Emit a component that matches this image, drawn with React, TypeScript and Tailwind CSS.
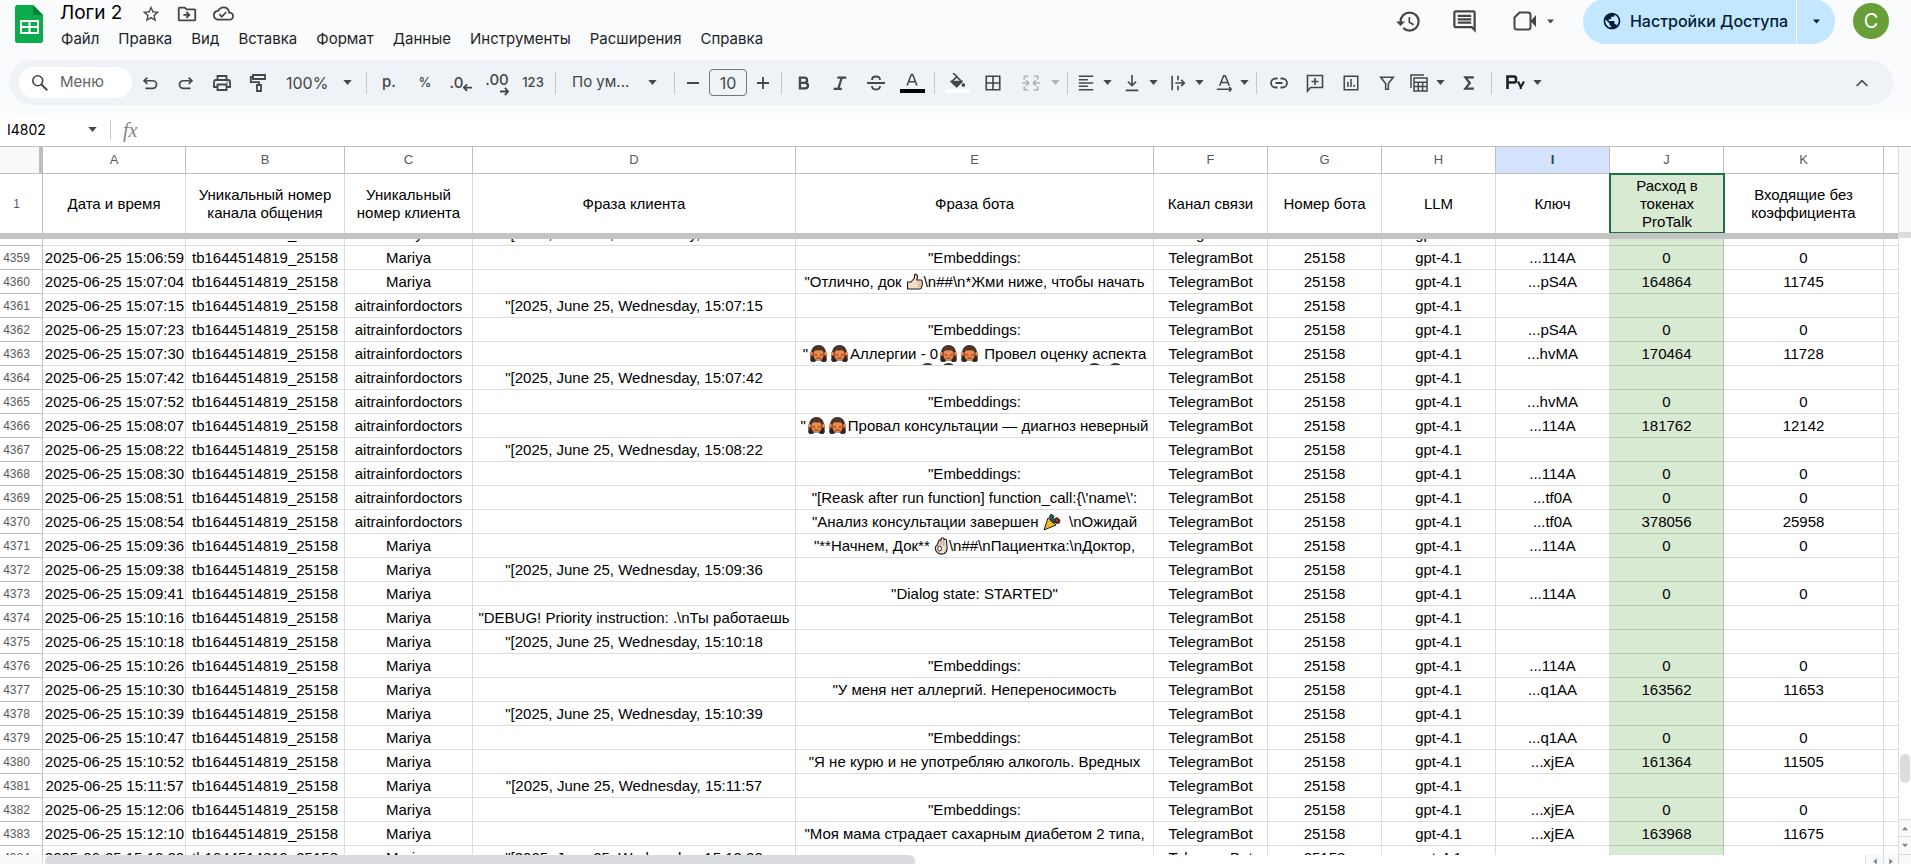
import React, { useState } from 'react';
import {
  MdOutlineDriveFileMove,
  MdOutlineCloudDone,
  MdHistory,
  MdOutlineComment,
  MdPublic,
  MdStarBorder,
} from 'react-icons/md';

interface LogRow {
  n: number;
  time: string;
  client: string;
  phrase?: string;
  bot?: React.ReactNode;
  key?: string;
  spent?: string;
  incoming?: string;
}

const M = 'Mariya';
const A = 'aitrainfordoctors';
const EMB = '"Embeddings:';

const Monkey = () => (
  <svg viewBox="0 0 21 17" className="inline-block w-[21px] h-[17px] align-[-3px]" aria-hidden="true">
    <path d="M4 16.500Q2 16.500 3 12 1.500 9 3.500 7 4.500.500 10.500.500T17.500 7Q19.500 9 18 12 19 16.500 17 16.500H14L13 15H8L7 16.500Z" fill="#4e3529" stroke="#1d1512" strokeWidth="0.8" />
    <ellipse cx="3.300" cy="8.800" rx="1.500" ry="2" fill="#f08c4e" />
    <ellipse cx="17.700" cy="8.800" rx="1.500" ry="2" fill="#f08c4e" />
    <path d="M5.500 8.500Q6 4.500 10.500 5.500 15 4.500 15.500 8.500 16 15.300 10.500 15.300T5.500 8.500Z" fill="#f08c4e" />
    <path d="M6 8.500 9.500 9v2.500L6.500 11zM15 8.500 11.500 9v2.500l3-.500z" fill="#c96032" />
    <path d="M8.500 13.200h4" stroke="#4e2a1c" strokeWidth="0.9" />
    <path d="M3.200 11.500 6 12.500 7 16H4Q2.500 15.500 3.200 11.500ZM17.800 11.500 15 12.500 14 16h3Q18.500 15.500 17.800 11.500Z" fill="#33241f" />
  </svg>
);

const ThumbUp = () => (
  <svg viewBox="0 0 18 18" className="inline-block w-[18px] h-[18px] align-[-4px]" aria-hidden="true">
    <path d="M1.500 9H5l3.500-4V2.500Q8.500 1 10 1.300 12 2 11.300 5L10.800 7H15q1.600.300 1 2 1 1 .200 2.300.500 1.300-.600 2.300.200 2-1.600 2.400H1.500Z" fill="#f6dcc8" stroke="#1f1a17" strokeWidth="1.100" strokeLinejoin="round" />
    <path d="M11.500 9.200h4M11.500 11.400h4M11.500 13.600H15" stroke="#c79f85" strokeWidth="0.8" />
  </svg>
);

const Popper = () => (
  <svg viewBox="0 0 18 18" className="inline-block w-[18px] h-[18px] align-[-4px]" aria-hidden="true">
    <path d="M5 5l8 7L1 17Z" fill="#f5b928" stroke="#1f1a17" strokeWidth="1" strokeLinejoin="round" />
    <path d="M6 4 8 1l3 2-1 3 3 3-3 1Z" fill="#12636b" stroke="#1f1a17" strokeWidth="0.8" />
    <path d="M11 6l3-1.500L17 7l-.500 3-3.500.500Z" fill="#6e2a22" stroke="#1f1a17" strokeWidth="0.8" />
    <circle cx="14" cy="7.500" r="1" fill="#a8402b" />
  </svg>
);

const OkHand = () => (
  <svg viewBox="0 0 15 18" className="inline-block w-[15px] h-[18px] align-[-4px]" aria-hidden="true">
    <path d="M3.200 8 5 3.500Q6 2 7 3.500L7.300 1.500Q8.500 0 9.800 1.500L10.300 2.500Q12 1.500 12.500 3.500L13 10q.500 4.500-2.500 6.500-3.500 1.500-7-.800Q.500 13 1.500 10 2 8.500 3.200 8Z" fill="#efdccf" stroke="#1f1a17" strokeWidth="1.100" strokeLinejoin="round" />
    <path d="M7 3.500V8M9.800 2.500V9" stroke="#8a7264" strokeWidth="0.7" />
    <ellipse cx="5.600" cy="11.500" rx="1.900" ry="2.500" fill="#fff" stroke="#1f1a17" strokeWidth="0.9" />
  </svg>
);

const rows: LogRow[] = [
  { n: 4358, time: '15:06:50', client: M, phrase: '15:06:50' },
  { n: 4359, time: '15:06:59', client: M, bot: EMB, key: '114A', spent: '0', incoming: '0' },
  { n: 4360, time: '15:07:04', client: M, bot: <>"Отлично, док <ThumbUp />\n##\n*Жми ниже, чтобы начать</>, key: 'pS4A', spent: '164864', incoming: '11745' },
  { n: 4361, time: '15:07:15', client: A, phrase: '15:07:15' },
  { n: 4362, time: '15:07:23', client: A, bot: EMB, key: 'pS4A', spent: '0', incoming: '0' },
  {
    n: 4363,
    time: '15:07:30',
    client: A,
    bot: (
      <>
        "<Monkey /><Monkey />Аллергии - 0<Monkey /><Monkey /> Провел оценку аспекта
        <span className="flex justify-between pl-[121px] pr-[27px]">
          <span><Monkey /><Monkey /></span>
          <span><Monkey /><Monkey /></span>
        </span>
      </>
    ),
    key: 'hvMA',
    spent: '170464',
    incoming: '11728',
  },
  { n: 4364, time: '15:07:42', client: A, phrase: '15:07:42' },
  { n: 4365, time: '15:07:52', client: A, bot: EMB, key: 'hvMA', spent: '0', incoming: '0' },
  { n: 4366, time: '15:08:07', client: A, bot: <>"<Monkey /><Monkey />Провал консультации — диагноз неверный</>, key: '114A', spent: '181762', incoming: '12142' },
  { n: 4367, time: '15:08:22', client: A, phrase: '15:08:22' },
  { n: 4368, time: '15:08:30', client: A, bot: EMB, key: '114A', spent: '0', incoming: '0' },
  { n: 4369, time: '15:08:51', client: A, bot: `"[Reask after run function] function_call:{\\'name\\':`, key: 'tf0A', spent: '0', incoming: '0' },
  { n: 4370, time: '15:08:54', client: A, bot: <>"Анализ консультации завершен <Popper />&nbsp; \nОжидай</>, key: 'tf0A', spent: '378056', incoming: '25958' },
  { n: 4371, time: '15:09:36', client: M, bot: <>"**Начнем, Док** <OkHand />\n##\nПациентка:\nДоктор,</>, key: '114A', spent: '0', incoming: '0' },
  { n: 4372, time: '15:09:38', client: M, phrase: '15:09:36' },
  { n: 4373, time: '15:09:41', client: M, bot: '"Dialog state: STARTED"', key: '114A', spent: '0', incoming: '0' },
  { n: 4374, time: '15:10:16', client: M, phrase: 'debug' },
  { n: 4375, time: '15:10:18', client: M, phrase: '15:10:18' },
  { n: 4376, time: '15:10:26', client: M, bot: EMB, key: '114A', spent: '0', incoming: '0' },
  { n: 4377, time: '15:10:30', client: M, bot: '"У меня нет аллергий. Непереносимость', key: 'q1AA', spent: '163562', incoming: '11653' },
  { n: 4378, time: '15:10:39', client: M, phrase: '15:10:39' },
  { n: 4379, time: '15:10:47', client: M, bot: EMB, key: 'q1AA', spent: '0', incoming: '0' },
  { n: 4380, time: '15:10:52', client: M, bot: '"Я не курю и не употребляю алкоголь. Вредных', key: 'xjEA', spent: '161364', incoming: '11505' },
  { n: 4381, time: '15:11:57', client: M, phrase: '15:11:57' },
  { n: 4382, time: '15:12:06', client: M, bot: EMB, key: 'xjEA', spent: '0', incoming: '0' },
  { n: 4383, time: '15:12:10', client: M, bot: '"Моя мама страдает сахарным диабетом 2 типа,', key: 'xjEA', spent: '163968', incoming: '11675' },
  { n: 4384, time: '15:12:20', client: M, phrase: '15:12:20' },
];

const phraseText = (p?: string) => {
  if (!p) return null;
  if (p === 'debug') return '"DEBUG! Priority instruction: .\\nТы работаешь';
  return `"[2025, June 25, Wednesday, ${p}`;
};

const letters = ['A', 'B', 'C', 'D', 'E', 'F', 'G', 'H', 'I', 'J', 'K'];
const titles = [
  'Дата и время',
  'Уникальный номер канала общения',
  'Уникальный номер клиента',
  'Фраза клиента',
  'Фраза бота',
  'Канал связи',
  'Номер бота',
  'LLM',
  'Ключ',
  'Расход в токенах ProTalk',
  'Входящие без коэффициента',
];
const menu = ['Файл', 'Правка', 'Вид', 'Вставка', 'Формат', 'Данные', 'Инструменты', 'Расширения', 'Справка'];

const Cols = () => (
  <colgroup>
    <col className="w-[43px]" />
    <col className="w-[143px]" />
    <col className="w-[159px]" />
    <col className="w-32" />
    <col className="w-[323px]" />
    <col className="w-[358px]" />
    <col className="w-[114px]" />
    <col className="w-[114px]" />
    <col className="w-[114px]" />
    <col className="w-[114px]" />
    <col className="w-[114px]" />
    <col className="w-40" />
    <col />
  </colgroup>
);

const Caret = ({ className = 'w-[9px]' }: { className?: string }) => (
  <svg viewBox="0 0 10 6" className={`h-[5px] shrink-0 fill-current ${className}`} aria-hidden="true">
    <path d="M0 0h10L5 6z" />
  </svg>
);

const Sep = () => <span className="w-px h-[22px] mx-1 shrink-0 bg-[#c4c7c5]" />;

interface ToolProps {
  label: string;
  children: React.ReactNode;
}

const Tool = ({ label, children }: ToolProps) => (
  <button aria-label={label} title={label} className="w-9 h-8 shrink-0 flex items-center justify-center rounded hover:bg-black/5">
    {children}
  </button>
);

const DropTool = ({ label, children }: ToolProps) => (
  <button aria-label={label} title={label} className="w-[46px] h-8 shrink-0 flex items-center rounded hover:bg-black/5">
    <span className="w-7 flex justify-center">{children}</span>
    <span className="w-3.5 flex justify-center"><Caret /></span>
  </button>
);

const Ico = ({ children, w = 20 }: { children: React.ReactNode; w?: number }) => (
  <svg width={w} height={w} viewBox="0 0 20 20" fill="none" stroke="currentColor" strokeWidth="1.6" className="shrink-0" aria-hidden="true">
    {children}
  </svg>
);

const Toolbar = () => {
  const [size, setSize] = useState('10');

  return (
    <div className="h-[45px] ml-[9px] mr-[18px] mb-2 pl-2.5 pr-[13px] flex items-center rounded-full bg-[#eff3f8] text-[#444746]">
      <label className="w-[113px] h-[31px] shrink-0 pl-3 flex items-center gap-[11px] rounded-full bg-white">
        <Ico w={18}>
          <circle cx="7.5" cy="7.5" r="5.5" strokeWidth="1.8" />
          <path d="M11.6 11.6 18 18" strokeWidth="2.2" />
        </Ico>
        <input aria-label="Меню" placeholder="Меню" className="w-16 text-[15px] outline-none placeholder:text-[#5f6368]" />
      </label>
      <Tool label="Отменить">
        <Ico w={18}><path d="M7 4 3.500 7.500 7 11M3.500 7.500H13a4 4 0 0 1 0 8.500H5" strokeWidth="1.900" /></Ico>
      </Tool>
      <Tool label="Повторить">
        <Ico w={18}><path d="M13 4l3.500 3.500L13 11M16.500 7.500H7a4 4 0 0 0 0 8.500h8" strokeWidth="1.900" /></Ico>
      </Tool>
      <Tool label="Печать">
        <Ico><path d="M5.500 7V3h9v4M5.500 14H2V9q0-2 2-2h12q2 0 2 2v5h-3.500M5.500 11.500h9V17h-9z" strokeWidth="1.800" /><path d="M14.500 9.500h1.200" /></Ico>
      </Tool>
      <Tool label="Копировать форматирование">
        <Ico><path d="M5 2h12v4H5zM5 4H2.800v5.200H11V12M9 12h4v6H9z" strokeWidth="1.800" /></Ico>
      </Tool>
      <label className="w-[86px] h-8 shrink-0 pl-2.5 flex items-center">
        <select aria-label="Масштаб" className="w-[57px] appearance-none bg-transparent text-base outline-none">
          <option>100%</option>
          <option>75%</option>
        </select>
        <Caret />
      </label>
      <Sep />
      <Tool label="Денежный формат"><span className="text-[15px] font-medium">р.</span></Tool>
      <Tool label="Процентный формат"><span className="text-[13px] font-medium">%</span></Tool>
      <Tool label="Уменьшить число знаков после запятой">
        <span className="flex items-end text-[15px] leading-5 font-medium">
          .0
          <Ico w={9}><path d="M9 1 2 8l7 7M2 8h18" strokeWidth="4" /></Ico>
        </span>
      </Tool>
      <Tool label="Увеличить число знаков после запятой">
        <span className="pt-1 flex flex-col items-end text-[15px] leading-[14px] font-medium">
          .00
          <Ico w={9}><path d="M11 2l7 8-7 8M18 10H0" strokeWidth="4" /></Ico>
        </span>
      </Tool>
      <Tool label="Другие форматы"><span className="text-[13px] font-medium">123</span></Tool>
      <Sep />
      <label className="w-[110px] h-8 shrink-0 pl-3 flex items-center">
        <select aria-label="Шрифт" className="w-[76px] appearance-none bg-transparent text-[15px] outline-none">
          <option>По ум...</option>
          <option>Arial</option>
        </select>
        <Caret />
      </label>
      <Sep />
      <button aria-label="Уменьшить размер шрифта" className="w-7 h-8 shrink-0 flex items-center justify-center">
        <span className="w-3 h-0.5 bg-current" />
      </button>
      <input
        aria-label="Размер шрифта"
        value={size}
        onChange={(e) => setSize(e.target.value)}
        className="w-[38px] h-[27px] mx-0.5 shrink-0 text-center text-base border border-[#747775] rounded"
      />
      <button aria-label="Увеличить размер шрифта" className="w-7 h-8 shrink-0 flex items-center justify-center">
        <Ico w={12}><path d="M10 0v20M0 10h20" strokeWidth="3" /></Ico>
      </button>
      <Sep />
      <Tool label="Полужирный">
        <Ico w={18}><path d="M5.500 4h5a2.800 2.800 0 0 1 0 5.800h-5zM5.500 9.800h5.800a3 3 0 0 1 0 6.200H5.500z" strokeWidth="2.600" /></Ico>
      </Tool>
      <Tool label="Курсив">
        <Ico w={18}><path d="M7 4h10M3 16.500h9M12 4 8 16.500" strokeWidth="2.400" /></Ico>
      </Tool>
      <Tool label="Зачеркнутый">
        <Ico><path d="M1 10h18M14 7q0-3.500-4-3.500T6 7M6 13q0 3.500 4 3.500t4-3.500" strokeWidth="1.800" /></Ico>
      </Tool>
      <Tool label="Цвет текста">
        <span className="w-[25px] flex flex-col items-center">
          <Ico w={14}><path d="M3 18 9 2h2l6 16M5.500 12.500h9" strokeWidth="2.200" /></Ico>
          <span className="w-full h-1 mt-0.5 bg-black" />
        </span>
      </Tool>
      <Sep />
      <Tool label="Цвет заливки">
        <span className="w-[25px] flex flex-col items-center">
          <Ico w={16}>
            <path d="M5 0l5 4.500L3 11l6.500 6 6.500-6-6.500-6.500" strokeWidth="2" />
            <path d="M3 10.500h13L9.500 17z" fill="currentColor" />
            <circle cx="18" cy="15" r="1.500" fill="currentColor" />
          </Ico>
          <span className="w-full h-1 bg-white" />
        </span>
      </Tool>
      <Tool label="Границы">
        <Ico w={18}><path d="M2.500 2.500h15v15h-15zM10 2.500v15M2.500 10h15" strokeWidth="1.800" /></Ico>
      </Tool>
      <button aria-label="Объединить ячейки" className="w-[52px] h-8 shrink-0 flex items-center text-[#b0b3b5]">
        <span className="w-10 flex justify-center">
          <Ico w={18}>
            <path d="M7 2.500H2.500V6M13 2.500h4.500V6M7 17.500H2.500V14M13 17.500h4.500V14M0 10h7M4.500 7 7.500 10l-3 3M20 10h-7M15.500 7l-3 3 3 3" strokeWidth="1.800" />
          </Ico>
        </span>
        <Caret />
      </button>
      <Sep />
      <DropTool label="Горизонтальное выравнивание">
        <Ico w={18}><path d="M2 2.500h16M2 6.300h10M2 10h16M2 13.700h10M2 17.500h16" /></Ico>
      </DropTool>
      <DropTool label="Вертикальное выравнивание">
        <Ico w={18}><path d="M10 1v12M5.500 8.500 10 13l4.500-4.500M3 18.200h14" strokeWidth="1.800" /></Ico>
      </DropTool>
      <DropTool label="Перенос текста">
        <Ico w={18}><path d="M3.500 2v16M10 2v5M10 13v5M7 10h10M13.500 6.500 17 10l-3.500 3.500" strokeWidth="1.800" /></Ico>
      </DropTool>
      <button aria-label="Поворот текста" className="w-[42px] h-8 shrink-0 flex items-center">
        <span className="w-[30px] flex justify-center">
          <Ico w={18}><path d="M4 13 8.500 2h1.800l4.500 11M6 9.500h7M1 17h16M14.500 14.500 17 17l-2.500 2.500" strokeWidth="1.700" /></Ico>
        </span>
        <Caret />
      </button>
      <Sep />
      <Tool label="Вставить ссылку">
        <Ico><path d="M8.500 5.500H6.500a4.500 4.500 0 0 0 0 9h2M11.500 5.500h2a4.500 4.500 0 0 1 0 9h-2M6.500 10h7" strokeWidth="1.800" /></Ico>
      </Tool>
      <Tool label="Вставить комментарий">
        <Ico><path d="M2.500 18V2.500h15v12H5.500zM10 5v7M6.500 8.500h7" /></Ico>
      </Tool>
      <Tool label="Вставить диаграмму">
        <Ico w={18}><path d="M2.500 2.500h15v15h-15zM6.500 8.500v6M10 5.500v9M13.500 12v2.500" strokeWidth="1.700" /></Ico>
      </Tool>
      <Tool label="Создать фильтр">
        <Ico w={18}><path d="M3 3.500h14l-5.500 7V17h-3v-6.500z" strokeWidth="1.700" /></Ico>
      </Tool>
      <DropTool label="Фильтры">
        <Ico><path d="M2 15V2h13M5 5h13v13H5zM5 9.300h13M5 13.600h13M9.300 9.300V18M13.600 9.300V18" strokeWidth="1.500" /></Ico>
      </DropTool>
      <Tool label="Функции">
        <Ico w={16}><path d="M16 3H5.500L11 10l-5.500 7H16" strokeWidth="2.800" /></Ico>
      </Tool>
      <Sep />
      <button aria-label="Py" className="h-8 shrink-0 pl-2.5 flex items-center gap-2 text-[#1f1f1f]">
        <svg width="19" height="15" viewBox="0 0 19 15" fill="none" stroke="currentColor" aria-hidden="true">
          <path d="M1.500 14V1.500h6.500q2 0 2 2v2q0 2-2 2H1.500" strokeWidth="2.600" />
          <path d="M12 6.500 14.800 12 18 6.500M14.800 11.500V14" strokeWidth="2.200" />
        </svg>
        <Caret className="w-[9px] text-[#444746]" />
      </button>
      <span className="flex-1" />
      <Tool label="Скрыть меню">
        <Ico w={12}><path d="M1 15l9-9 9 9" strokeWidth="2.800" /></Ico>
      </Tool>
    </div>
  );
};

const Header = () => (
  <header className="h-[60px] pl-[15px] pr-[22px] flex items-start justify-between">
    <div className="flex">
      <svg viewBox="0 0 28 38" className="w-7 h-[38px] mt-[5px] mr-[11px]" aria-hidden="true">
        <path d="M2.500 0H18l10 10v25.500a2.500 2.500 0 0 1-2.500 2.500h-23A2.500 2.500 0 0 1 0 35.500v-33A2.500 2.500 0 0 1 2.500 0z" fill="#0cac4c" />
        <path d="M18 0l10 10H18z" fill="#09803a" />
        <path d="M6 16h17v12H6zM6 22h17M14.500 16v12" fill="none" stroke="#fff" strokeWidth="2" />
      </svg>
      <div>
        <div className="h-[27px] pl-[6px] flex items-center text-[#444746]">
          <h1 className="w-[73px] text-[19px] text-black">Логи 2</h1>
          <button aria-label="Пометить" className="w-9 flex justify-center"><MdStarBorder size={20} /></button>
          <button aria-label="Переместить" className="w-9 flex justify-center"><MdOutlineDriveFileMove size={22} /></button>
          <button aria-label="Статус документа" className="w-9 flex justify-center"><MdOutlineCloudDone size={21} /></button>
        </div>
        <nav className="h-6 pl-[7px] flex items-center gap-[19px] text-[15px] text-[#1f1f1f]">
          {menu.map((m) => (
            <button key={m}>{m}</button>
          ))}
        </nav>
      </div>
    </div>

    <div className="flex items-center h-11 -mt-px text-[#444746]">
      <button aria-label="История версий" className="w-14 flex justify-center"><MdHistory size={27} /></button>
      <button aria-label="Комментарии" className="w-14 flex justify-center"><MdOutlineComment size={27} /></button>
      <button aria-label="Встреча" className="w-[73px] pl-[21px] flex items-center gap-[10px]">
        <svg width="24" height="20" viewBox="0 0 24 20" fill="none" stroke="currentColor" strokeWidth="2" aria-hidden="true">
          <path d="M6.500 1.500H15q2.500 0 2.500 2.500v12q0 2.500-2.500 2.500H4Q1.500 18.500 1.500 16V6.500z" />
          <path d="M17.500 10 23 4v12z" fill="currentColor" stroke="none" />
        </svg>
        <Caret className="w-[7px]" />
      </button>
      <div className="w-[252px] h-[45px] ml-[18px] flex rounded-full overflow-hidden bg-[#c2e7ff] text-[#001d35]">
        <button className="flex-1 pl-[11px] flex items-center justify-center gap-2 text-base font-medium border-r border-white">
          <MdPublic size={20} />
          Настройки Доступа
        </button>
        <button aria-label="Быстрый доступ" className="w-[38px] flex items-center justify-center"><Caret className="w-[7px]" /></button>
      </div>
      <button className="w-9 h-9 ml-[18px] rounded-full bg-[#689f38] text-white text-xl">C</button>
    </div>
  </header>
);

const cell = 'h-6 p-0 border-b border-r border-[#dadcdd]';
const scrollButton = 'flex items-center justify-center border-[#dadcdd] bg-[#f8f9fa] text-[#80868b]';

const App = () => {
  return (
    <div className="h-screen flex flex-col overflow-hidden bg-[#f9fbfd] font-['Inter',sans-serif]">
      <Header />
      <Toolbar />

      <div className="h-[33px] shrink-0 flex items-center bg-white">
        <input aria-label="Поле имени" defaultValue="I4802" className="w-20 pl-[7px] text-[14px] outline-none" />
        <button aria-label="Список диапазонов" className="w-6 flex justify-center text-[#444746]"><Caret /></button>
        <span className="w-px h-5 ml-1.5 mr-3 bg-[#c4c7c5]" />
        <span className="text-xl leading-6 italic text-[#80868b] font-['Liberation_Serif',serif]">fx</span>
        <input aria-label="Строка формул" className="flex-1 px-3 outline-none" />
      </div>

      <div className="flex-1 min-h-0 flex border-t border-[#c0c0c0] font-['Liberation_Sans',sans-serif] text-[15px] leading-[18px]">
        <div className="flex-1 min-w-0 flex flex-col bg-white">
          <table className="w-full shrink-0 table-fixed border-separate border-spacing-0">
            <Cols />
            <thead>
              <tr className="text-[13px] leading-[18px] text-[#575a5a]">
                <th className="h-[27px] p-0 bg-[#f8f9fa] border-b border-b-[#c0c0c0] border-r-4 border-r-[#bdbdbd]" aria-label="Выделить все" />
                {letters.map((l) => (
                  <th
                    key={l}
                    className={`p-0 border-b border-r border-[#c0c0c0] ${l === 'I' ? 'font-bold bg-[#d3e3fd] text-[#303f6e]' : 'font-normal'}`}
                  >
                    {l}
                  </th>
                ))}
                <th className="p-0 border-b border-[#c0c0c0]" aria-label="L" />
              </tr>
              <tr>
                <th className="h-[59px] p-0 pr-[9px] text-xs font-normal text-[#575a5a] border-r border-[#c0c0c0]">1</th>
                {titles.map((t, i) => (
                  <th
                    key={t}
                    className={`p-0 font-normal ${i === 9 ? 'px-4 bg-[#d9ead3] outline-2 -outline-offset-1 outline-[#1e6f42]' : 'px-2 border-r border-[#dadcdd]'}`}
                  >
                    {t}
                  </th>
                ))}
                <th className="p-0" aria-label="L1" />
              </tr>
            </thead>
          </table>
          <div className="h-[6px] shrink-0 bg-[#c4c4c4]" />

          {/* scrolled part, the first and the last row are only partly visible */}
          <div className="flex-1 min-h-0 overflow-hidden">
            <table className="w-full -mt-[17px] table-fixed border-separate border-spacing-0 text-center">
              <Cols />
              <tbody>
                {rows.map((r) => (
                  <tr key={r.n}>
                    <th className="h-6 p-0 pr-[9px] text-xs font-normal text-[#575a5a] border-b border-r border-[#c0c0c0]">{r.n}</th>
                    <td className={`${cell} pl-px whitespace-nowrap`}>2025-06-25 {r.time}</td>
                    <td className={cell}>tb1644514819_25158</td>
                    <td className={cell}>{r.client}</td>
                    <td className={`${cell} whitespace-nowrap`}>{phraseText(r.phrase)}</td>
                    <td className={`${cell} whitespace-nowrap`}>
                      <div className="h-[23px] pt-[3px] overflow-hidden">{r.bot}</div>
                    </td>
                    <td className={cell}>TelegramBot</td>
                    <td className={cell}>25158</td>
                    <td className={cell}>gpt-4.1</td>
                    <td className={cell}>{r.key && `...${r.key}`}</td>
                    <td className="h-6 p-0 border-b border-r border-[#b4c3af] bg-[#d9ead3]">{r.spent}</td>
                    <td className={cell}>{r.incoming}</td>
                    <td className="h-6 p-0 border-b border-[#dadcdd]" />
                  </tr>
                ))}
              </tbody>
            </table>
          </div>

          <div className="h-[9px] shrink-0 flex bg-white overflow-hidden">
            <div className="w-[43px] bg-[#f8f9fa] border-r border-[#dadcdd]" />
            <div className="flex-1 pl-0.5">
              <div className="w-[870px] max-w-full h-3 rounded-full bg-[#dadce0]" />
            </div>
            <button aria-label="Влево" className={`w-[18px] h-3 border-l ${scrollButton}`}><Caret className="w-[6px] rotate-90" /></button>
            <button aria-label="Вправо" className={`w-[15px] h-3 border-l ${scrollButton}`}><Caret className="w-[6px] -rotate-90" /></button>
          </div>
        </div>

        <div className="w-[13px] shrink-0 flex flex-col border-l border-[#dadcdd] bg-white">
          <div className="h-[85px] shrink-0 bg-[#f8f9fa]" />
          <div className="h-[6px] shrink-0 bg-[#dadce0]" />
          <div className="flex-1 flex flex-col justify-end">
            <div className="h-[29px] mx-px mb-9 rounded-full bg-[#dadce0]" />
          </div>
          <button aria-label="Вверх" className={`h-[17px] border-t ${scrollButton}`}><Caret className="w-[6px] rotate-180" /></button>
          <button aria-label="Вниз" className={`h-[18px] border-t ${scrollButton}`}><Caret className="w-[6px]" /></button>
          <div className="h-[10px] shrink-0 border-t border-[#dadcdd] bg-[#f8f9fa]" />
        </div>
      </div>
    </div>
  );
};

export default App;
